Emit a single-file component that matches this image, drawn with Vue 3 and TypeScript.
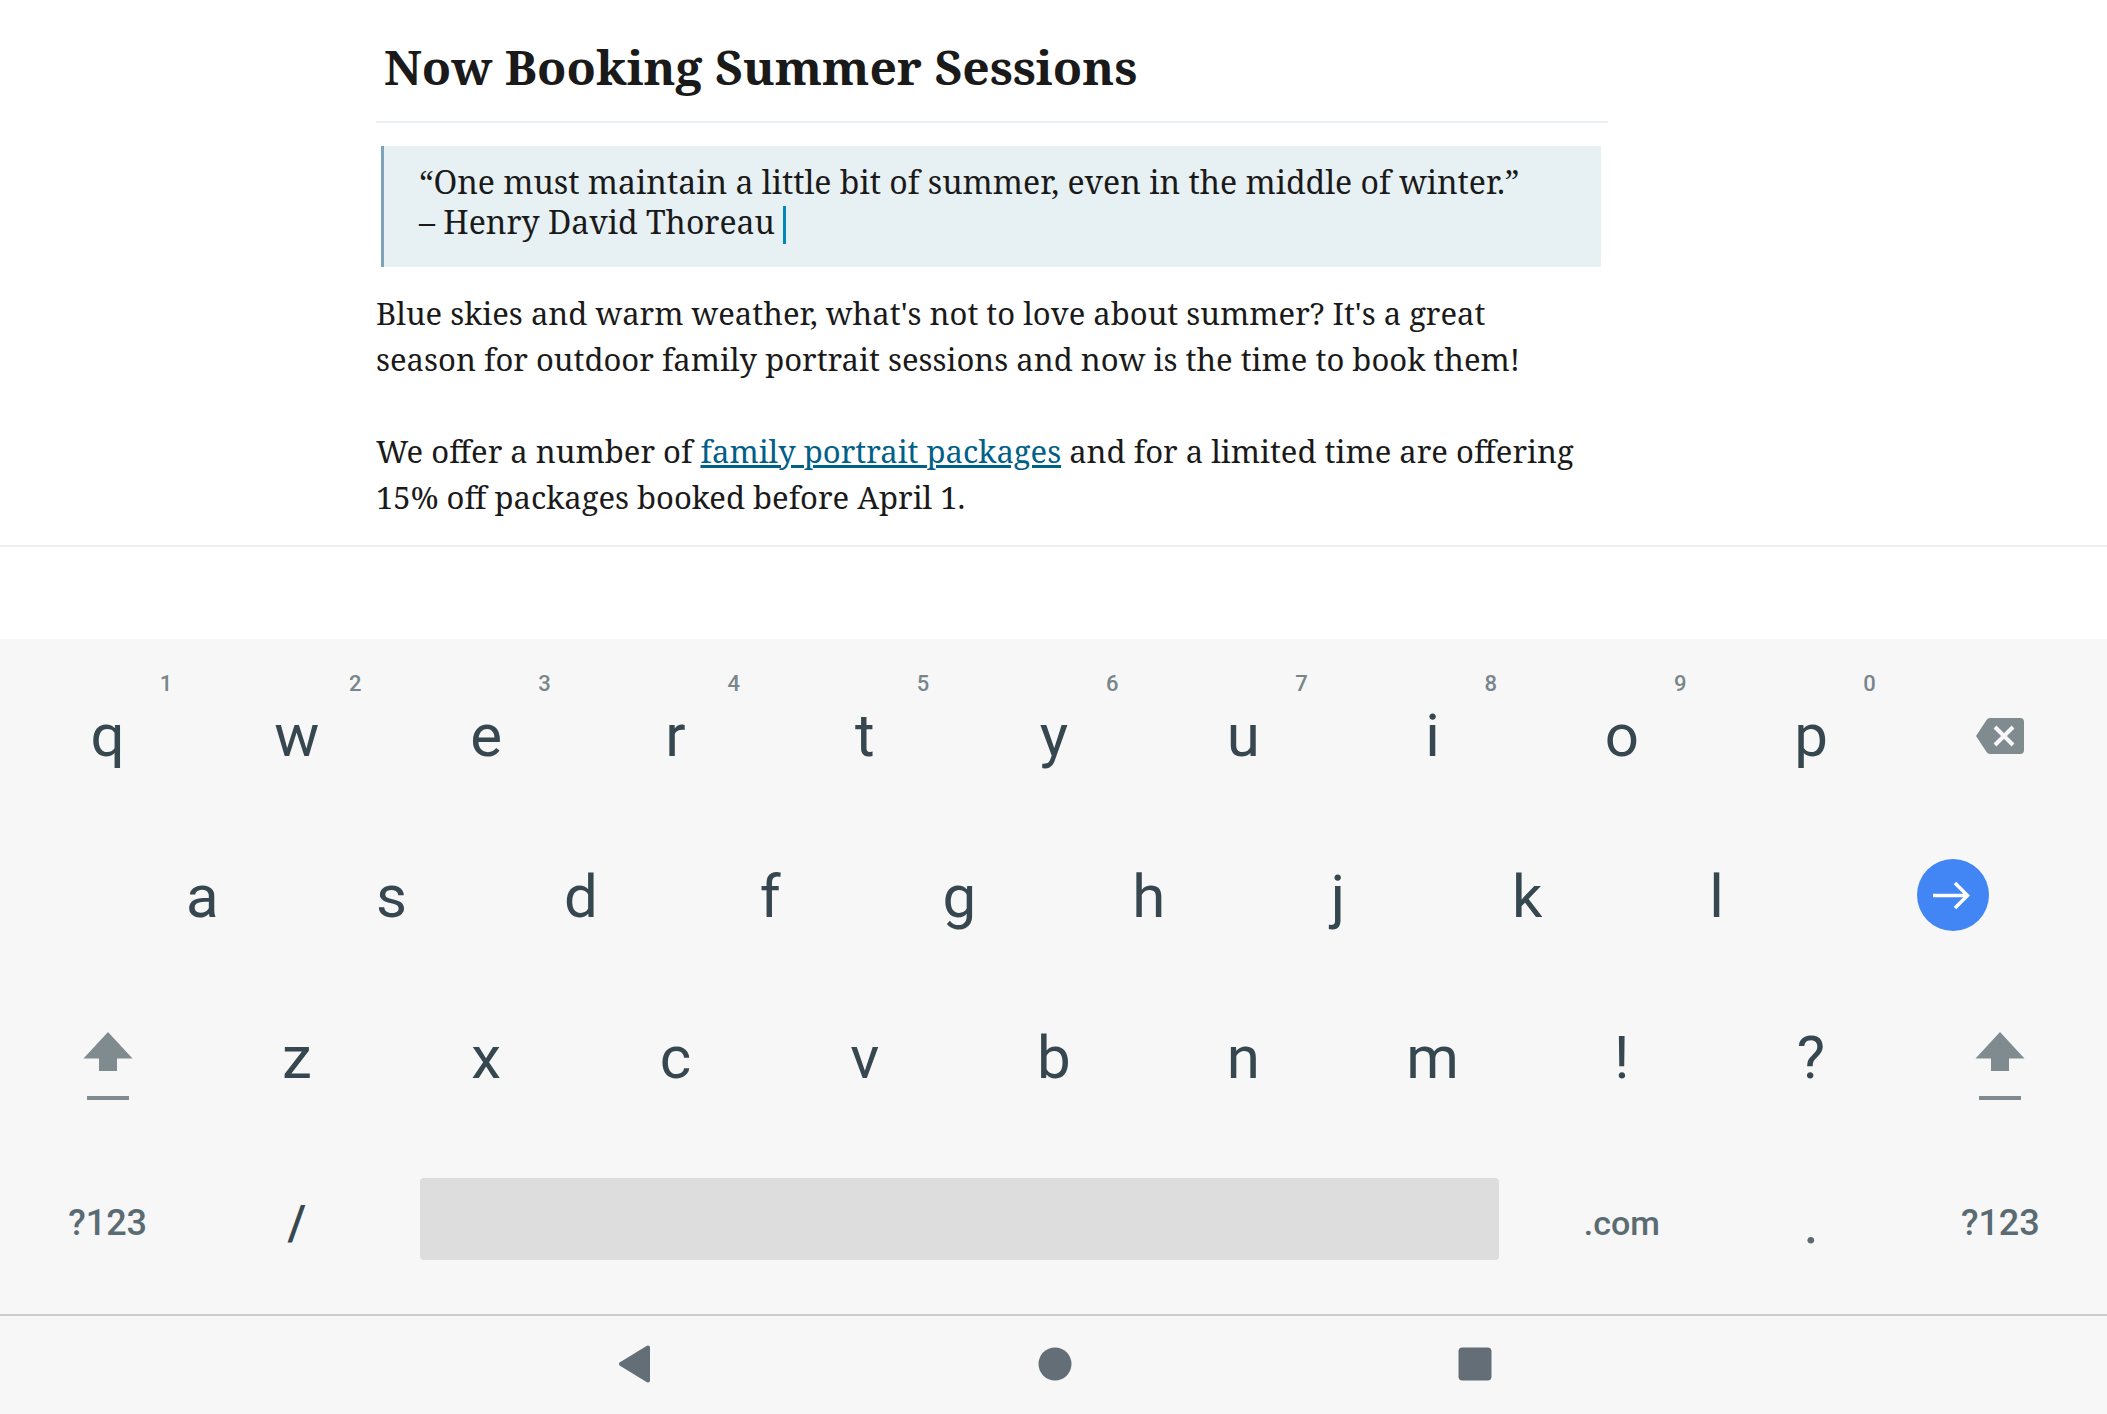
<script setup lang="ts">
interface LetterKey {
  label: string
  hint?: string
}

const topRow: LetterKey[] = [...'qwertyuiop'].map((label, i) => ({
  label,
  hint: String((i + 1) % 10),
}))
const homeRow: string[] = [...'asdfghjkl']
const bottomRow: string[] = [...'zxcvbnm!?']
</script>

<template>
  <div class="screen">
    <main class="editor">
      <article class="post">
        <h1 class="title">Now Booking Summer Sessions</h1>
        <blockquote class="quote">
          “One must maintain a little bit of summer, even in the middle of winter.”<br />
          – Henry David Thoreau <span class="caret"></span>
        </blockquote>
        <p class="text">
          Blue skies and warm weather, what's not to love about summer? It's a great<br />
          season for outdoor family portrait sessions and now is the time to book them!
        </p>
        <p class="text">
          We offer a number of <a href="#packages">family portrait packages</a> and for a
          limited time are offering<br />
          15% off packages booked before April 1.
        </p>
      </article>
    </main>
    <div class="toolbar"></div>

    <section class="keyboard" aria-label="Keyboard">
      <div class="row">
        <button v-for="key in topRow" :key="key.label" type="button" class="key">
          {{ key.label }}<span class="hint">{{ key.hint }}</span>
        </button>
        <button type="button" class="key" aria-label="Backspace">
          <svg width="48" height="36" viewBox="0 0 48 36">
            <path d="M14 0H44Q48 0 48 4V32Q48 36 44 36H14Q12 36 10.500 34L0 18L10.500 2Q12 0 14 0Z" fill="#808b8f" />
            <path d="M19 9L37 27M37 9L19 27" stroke="#f7f7f7" stroke-width="4" />
          </svg>
        </button>
      </div>

      <div class="row home">
        <button v-for="key in homeRow" :key="key" type="button" class="key">{{ key }}</button>
        <button type="button" class="key wide" aria-label="Next">
          <svg width="72" height="72" viewBox="0 0 72 72">
            <circle cx="36" cy="36" r="36" fill="#4285f4" />
            <path d="M16 36.500H51M38 24L50.500 36.500L38 49" fill="none" stroke="#fff" stroke-width="3.500" />
          </svg>
        </button>
      </div>

      <div class="row">
        <button type="button" class="key shift" aria-label="Left shift">
          <svg width="50" height="68" viewBox="0 0 50 68">
            <path d="M25 0L49.500 26.500H34V39H16V26.500H.5Z" fill="#808b8f" />
            <rect x="4" y="64" width="42" height="4" fill="#808b8f" />
          </svg>
        </button>
        <button v-for="key in bottomRow" :key="key" type="button" class="key">{{ key }}</button>
        <button type="button" class="key shift" aria-label="Right shift">
          <svg width="50" height="68" viewBox="0 0 50 68">
            <path d="M25 0L49.500 26.500H34V39H16V26.500H.5Z" fill="#808b8f" />
            <rect x="4" y="64" width="42" height="4" fill="#808b8f" />
          </svg>
        </button>
      </div>

      <div class="row">
        <button type="button" class="key low symbols">?123</button>
        <button type="button" class="key low slash">/</button>
        <button type="button" class="key space" aria-label="Space"><span class="bar"></span></button>
        <button type="button" class="key low domain">.com</button>
        <button type="button" class="key low period">.</button>
        <button type="button" class="key low symbols">?123</button>
      </div>
    </section>

    <nav class="system" aria-label="System">
      <button type="button" class="nav-button" aria-label="Back">
        <svg width="34" height="38" viewBox="0 0 34 38">
          <path d="M30 2.500L3 19L30 35.500Z" fill="#636e76" stroke="#636e76" stroke-width="4" stroke-linejoin="round" />
        </svg>
      </button>
      <button type="button" class="nav-button" aria-label="Home">
        <svg width="34" height="34" viewBox="0 0 34 34">
          <circle cx="17" cy="17" r="16.500" fill="#636e76" />
        </svg>
      </button>
      <button type="button" class="nav-button" aria-label="Recent apps">
        <svg width="34" height="34" viewBox="0 0 34 34">
          <rect x=".5" y=".5" width="33" height="33" rx="4" fill="#636e76" />
        </svg>
      </button>
    </nav>
  </div>
</template>

<style>
body {
  background: #fff;
}
</style>

<style scoped>
.screen {
  display: flex;
  flex-direction: column;
  min-height: 100vh;
  font-family: Roboto, sans-serif;
}

.editor {
  padding: 35px 499px 25px 376px;
  border-bottom: 2px solid #eceff1;
  color: #1a1a1a;
  font-family: "Noto Serif", "Droid Serif", "DejaVu Serif", serif;
}

.title {
  margin: 0 0 23px;
  padding: 0 8px 22px;
  border-bottom: 2px solid #e9eff3;
  font-size: 48px;
  line-height: 64px;
}

.quote {
  margin: 0 7px 23px 5px;
  padding: 16px 0 25px 35px;
  border-left: 3px solid #7ca3b9;
  background: #e7f0f3;
  font-size: 32px;
  line-height: 40px;
}

.caret {
  display: inline-block;
  width: 3px;
  height: 38px;
  margin-bottom: -10px;
  vertical-align: baseline;
  background: #0087be;
}

.text {
  margin: 0 0 46px;
  font-size: 31px;
  line-height: 46px;
}

.text:last-child {
  margin-bottom: 0;
}

.text a {
  color: #016087;
}

.toolbar {
  height: 92px;
}

.keyboard {
  padding: 16px 12px 15px 13px;
  background: #f7f7f7;
}

.row {
  display: flex;
  height: 161px;
}

.home {
  padding-left: calc(100% / 22);
}

.key {
  position: relative;
  display: flex;
  flex: 1 1 0;
  align-items: center;
  justify-content: center;
  min-width: 0;
  margin: 0;
  padding: 0;
  border: 0;
  background: none;
  color: #37474f;
  font-family: inherit;
  font-size: 60px;
  line-height: 72px;
}

.hint {
  position: absolute;
  top: 17px;
  right: 30px;
  color: #78868c;
  font-size: 22px;
  font-weight: 500;
  line-height: 24px;
}

.wide {
  flex-grow: 1.5;
  padding-bottom: 3px;
}

.shift {
  padding-top: 16px;
}

.low {
  padding-top: 8px;
}

.symbols {
  color: #5b6b72;
  font-size: 36px;
  font-weight: 500;
}

.slash {
  font-size: 48px;
  font-weight: 500;
}

.domain {
  color: #5b6b72;
  font-size: 34px;
  font-weight: 500;
}

.period {
  color: #5b6b72;
}

.space {
  flex-grow: 6;
}

.bar {
  flex: 1;
  height: 82px;
  margin: 0 28px;
  border-radius: 4px;
  background: #ddd;
}

.system {
  display: flex;
  flex: 1;
  justify-content: center;
  min-height: 94px;
  padding: 0 0 3px 3px;
  border-top: 2px solid #ccc;
  background: #f7f7f7;
}

.nav-button {
  display: flex;
  flex: 0 1 420px;
  align-items: center;
  justify-content: center;
  padding: 0;
  border: 0;
  background: none;
}
</style>
